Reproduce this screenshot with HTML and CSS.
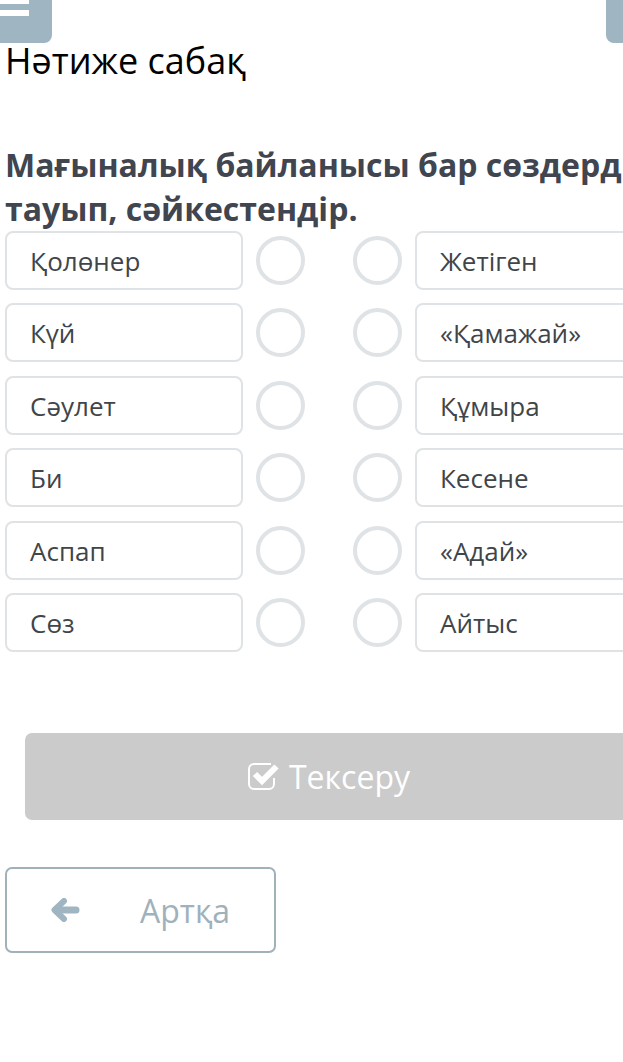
FILE: index.html
```html
<!DOCTYPE html>
<html lang="kk">
<head>
  <meta charset="UTF-8">
  <meta name="viewport" content="width=device-width, initial-scale=1">
  <title>Нәтиже сабақ</title>
  <link rel="stylesheet" href="styles.css">
</head>
<body>
  <div class="page">
    <header class="topbar">
      <button class="tab menu" type="button" aria-label="Мәзір">
        <svg width="29" height="30" viewBox="0 0 29 30" fill="#fff" aria-hidden="true">
          <path d="M0 0h29v6H0zM0 12h29v6H0zM0 24h29v6H0z"/>
        </svg>
      </button>
      <button class="tab side" type="button" aria-label="Профиль"></button>
    </header>

    <main>
      <h1>Нәтиже сабақ</h1>
      <h2>Мағыналық байланысы бар сөздерді тауып, сәйкестендір.</h2>

      <form>
        <div class="pairs">
          <label class="card" for="l1">Қолөнер</label>
          <input type="radio" name="left" id="l1">
          <input type="radio" name="right" id="r1">
          <label class="card" for="r1">Жетіген</label>

          <label class="card" for="l2">Күй</label>
          <input type="radio" name="left" id="l2">
          <input type="radio" name="right" id="r2">
          <label class="card" for="r2">«Қамажай»</label>

          <label class="card" for="l3">Сәулет</label>
          <input type="radio" name="left" id="l3">
          <input type="radio" name="right" id="r3">
          <label class="card" for="r3">Құмыра</label>

          <label class="card" for="l4">Би</label>
          <input type="radio" name="left" id="l4">
          <input type="radio" name="right" id="r4">
          <label class="card" for="r4">Кесене</label>

          <label class="card" for="l5">Аспап</label>
          <input type="radio" name="left" id="l5">
          <input type="radio" name="right" id="r5">
          <label class="card" for="r5">«Адай»</label>

          <label class="card" for="l6">Сөз</label>
          <input type="radio" name="left" id="l6">
          <input type="radio" name="right" id="r6">
          <label class="card" for="r6">Айтыс</label>
        </div>

        <button class="check" type="submit">
          <svg width="31" height="28" viewBox="0 0 31 28" fill="none" stroke="#fff" aria-hidden="true">
            <path d="M23 1H6a5 5 0 0 0-5 5v15a5 5 0 0 0 5 5h15a5 5 0 0 0 5-5v-6" stroke-width="2"/>
            <path d="M7 11l7 7L28.500 3.500" stroke-width="6"/>
          </svg>
          Тексеру
        </button>
      </form>

      <button class="back" type="button">
        <svg width="29" height="24" viewBox="0 0 29 24" fill="none" stroke="#9fb5c1" stroke-linecap="round" stroke-linejoin="round" aria-hidden="true">
          <path d="M13 3L3.500 12l9.500 9" stroke-width="6"/>
          <path d="M5 12h20" stroke-width="7"/>
        </svg>
        Артқа
      </button>
    </main>
  </div>
</body>
</html>
```

FILE: styles.css
```css
* {
  box-sizing: border-box;
}
body {
  margin: 0;
  background: #fff;
  color: #40454a;
  font-family: "Open Sans", "Noto Sans", sans-serif;
  overflow-x: hidden;
}
button {
  font-family: inherit;
  cursor: pointer;
}
.topbar {
  display: flex;
  justify-content: space-between;
}
.tab {
  height: 43px;
  padding: 0;
  border: none;
  background: #9fb5c1;
}
.menu {
  width: 52px;
  display: flex;
  align-items: flex-start;
  border-radius: 0 0 8px 0;
}
.menu svg {
  margin-top: -14px;
}
.side {
  width: 17px;
  border-radius: 0 0 0 8px;
}
/* the exercise is a bit wider than the screen */
main {
  margin: 0 -30px 0 5px;
}
h1 {
  margin: 0;
  color: #000;
  font-size: 36px;
  font-weight: 400;
  line-height: 36px;
}
h2 {
  margin: 64px 0 0;
  color: #40454f;
  font-size: 32px;
  font-weight: 700;
  line-height: 44px;
}
.pairs {
  display: grid;
  grid-template-columns: 1fr 84px 49px 1fr;
  column-gap: 13px;
  align-items: center;
  align-content: space-between;
  min-height: 421px;
}
.card {
  height: 59px;
  padding: 0 23px;
  border: 2px solid #dfe3e6;
  border-radius: 8px;
  font-size: 26px;
  line-height: 57px;
  cursor: pointer;
}
.pairs input {
  appearance: none;
  width: 49px;
  height: 49px;
  margin: 0;
  border: 4px solid #dfe3e6;
  border-radius: 50%;
  cursor: pointer;
}
.pairs input:checked {
  background: #9fb5c1;
}
.check {
  display: flex;
  align-items: center;
  justify-content: center;
  gap: 10px;
  width: calc(100% - 40px);
  height: 87px;
  margin: 81px 20px 0;
  border: none;
  border-radius: 7px;
  background: #cbcbcb;
  color: #fff;
  font-size: 32px;
}
.back {
  display: flex;
  align-items: center;
  gap: 60px;
  height: 86px;
  margin-top: 47px;
  padding: 0 44px;
  border: 2px solid #a0b1b9;
  border-radius: 7px;
  background: #fff;
  color: #9fb1ba;
  font-size: 32px;
}
```
